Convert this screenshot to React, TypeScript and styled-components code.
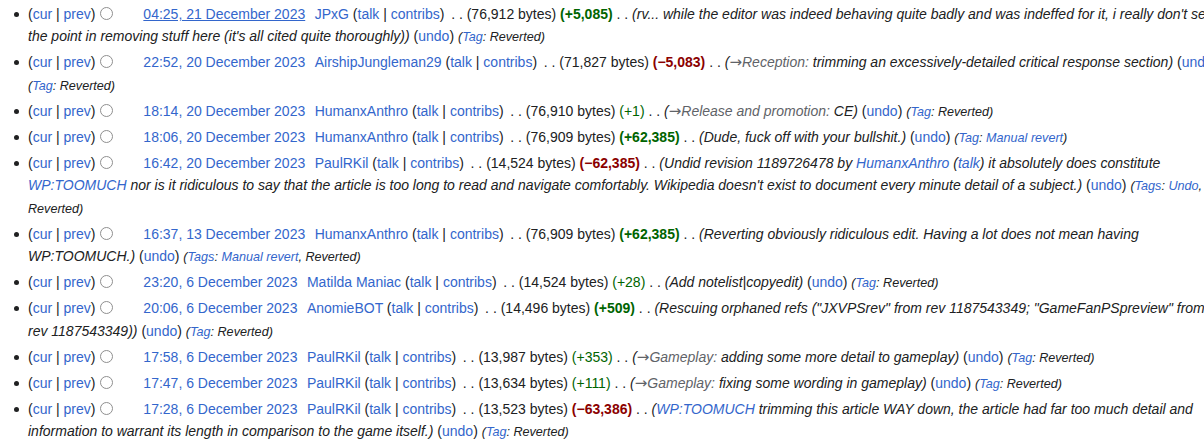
import React from 'react';
import styled, { createGlobalStyle } from 'styled-components';

const Global = createGlobalStyle`
  html, body { margin: 0; padding: 0; background: #ffffff; overflow: hidden; }
  body {
    font-family: "Liberation Sans", Arial, sans-serif;
    font-size: 14px;
    color: #202122;
  }
`;

const HistoryList = styled.ul`
  box-sizing: border-box;
  width: 1222px;
  margin: 3px 0 0 0;
  padding: 0 0 0 28px;
  list-style: none;
  line-height: 22.4px;
`;

const Row = styled.li`
  position: relative;
  margin: 0 0 3.66px 0;
  &::before {
    content: '';
    position: absolute;
    left: -14px;
    top: 8.7px;
    width: 5px;
    height: 5px;
    border-radius: 50%;
    background: #202122;
  }
`;

const Link = styled.a<{ $underline?: boolean; $muted?: boolean }>`
  color: ${(p) => (p.$muted ? '#5f6368' : '#3366cc')};
  text-decoration: ${(p) => (p.$underline ? 'underline' : 'none')};
  cursor: pointer;
`;

const Radio = styled.span<{ $hidden?: boolean }>`
  display: inline-block;
  box-sizing: border-box;
  width: 13px;
  height: 13px;
  margin: 0 4px 0 5px;
  border: 1px solid #8f8f8f;
  border-radius: 50%;
  background: #fff;
  vertical-align: -1px;
  visibility: ${(p) => (p.$hidden ? 'hidden' : 'visible')};
`;

const User = styled.span`
  margin-left: 0.4em;
  margin-right: 0.2em;
`;

const Size = styled.span``;

const Change = styled.span<{ $sign: 'pos' | 'neg'; $bold?: boolean }>`
  color: ${(p) => (p.$sign === 'pos' ? '#006400' : '#8b0000')};
  font-weight: ${(p) => (p.$bold ? 'bold' : 'normal')};
`;

const Comment = styled.span`
  font-style: italic;
`;

const AutoComment = styled.span`
  color: #5f6368;
`;

const Arrow = styled.span`
  font-family: "DejaVu Sans", sans-serif;
  font-size: 15px;
  line-height: 1;
`;

const Tags = styled.span`
  font-style: italic;
  font-size: 90%;
  line-height: 1;
`;

type Entry = {
  date: string;
  hover?: boolean;
  user: string;
  bytes: string;
  change: string;
  sign: 'pos' | 'neg';
  bold: boolean;
  comment: React.ReactNode;
  tags: React.ReactNode;
};

const reverted = (
  <>
    (<Link>Tag</Link>: Reverted)
  </>
);

const manualRevert = (
  <>
    (<Link>Tag</Link>: <Link>Manual revert</Link>)
  </>
);

const manualReverted = (
  <>
    (<Link>Tags</Link>: <Link>Manual revert</Link>, Reverted)
  </>
);

const undoReverted = (
  <>
    (<Link>Tags</Link>: <Link>Undo</Link>, Reverted)
  </>
);

const Auto: React.FC<{ section: string }> = ({ section }) => (
  <AutoComment>
    <Link $muted>
      <Arrow>→</Arrow>
      {section}
    </Link>
    :
  </AutoComment>
);

const entries: Entry[] = [
  {
    date: '04:25, 21 December 2023',
    hover: true,
    user: 'JPxG',
    bytes: '76,912',
    change: '+5,085',
    sign: 'pos',
    bold: true,
    comment: (
      <>
        rv... while the editor was indeed behaving quite badly and was indeffed for it, i really don't see the point
        in removing stuff here (it's all cited quite thoroughly)
      </>
    ),
    tags: reverted,
  },
  {
    date: '22:52, 20 December 2023',
    user: 'AirshipJungleman29',
    bytes: '71,827',
    change: '−5,083',
    sign: 'neg',
    bold: true,
    comment: (
      <>
        <Auto section="Reception" /> trimming an excessively-detailed critical response section
      </>
    ),
    tags: reverted,
  },
  {
    date: '18:14, 20 December 2023',
    user: 'HumanxAnthro',
    bytes: '76,910',
    change: '+1',
    sign: 'pos',
    bold: false,
    comment: (
      <>
        <Auto section="Release and promotion" /> CE
      </>
    ),
    tags: reverted,
  },
  {
    date: '18:06, 20 December 2023',
    user: 'HumanxAnthro',
    bytes: '76,909',
    change: '+62,385',
    sign: 'pos',
    bold: true,
    comment: <>Dude, fuck off with your bullshit.</>,
    tags: manualRevert,
  },
  {
    date: '16:42, 20 December 2023',
    user: 'PaulRKil',
    bytes: '14,524',
    change: '−62,385',
    sign: 'neg',
    bold: true,
    comment: (
      <>
        Undid revision 1189726478 by <Link>HumanxAnthro</Link> (<Link>talk</Link>) it absolutely does constitute{' '}
        <Link>WP:TOOMUCH</Link> nor is it ridiculous to say that the article is too long to read and navigate
        comfortably. Wikipedia doesn't exist to document every minute detail of a subject.
      </>
    ),
    tags: undoReverted,
  },
  {
    date: '16:37, 13 December 2023',
    user: 'HumanxAnthro',
    bytes: '76,909',
    change: '+62,385',
    sign: 'pos',
    bold: true,
    comment: <>Reverting obviously ridiculous edit. Having a lot does not mean having WP:TOOMUCH.</>,
    tags: manualReverted,
  },
  {
    date: '23:20, 6 December 2023',
    user: 'Matilda Maniac',
    bytes: '14,524',
    change: '+28',
    sign: 'pos',
    bold: false,
    comment: <>Add notelist|copyedit</>,
    tags: reverted,
  },
  {
    date: '20:06, 6 December 2023',
    user: 'AnomieBOT',
    bytes: '14,496',
    change: '+509',
    sign: 'pos',
    bold: true,
    comment: <>Rescuing orphaned refs ("JXVPSrev" from rev 1187543349; "GameFanPSpreview" from rev 1187543349)</>,
    tags: reverted,
  },
  {
    date: '17:58, 6 December 2023',
    user: 'PaulRKil',
    bytes: '13,987',
    change: '+353',
    sign: 'pos',
    bold: false,
    comment: (
      <>
        <Auto section="Gameplay" /> adding some more detail to gameplay
      </>
    ),
    tags: reverted,
  },
  {
    date: '17:47, 6 December 2023',
    user: 'PaulRKil',
    bytes: '13,634',
    change: '+111',
    sign: 'pos',
    bold: false,
    comment: (
      <>
        <Auto section="Gameplay" /> fixing some wording in gameplay
      </>
    ),
    tags: reverted,
  },
  {
    date: '17:28, 6 December 2023',
    user: 'PaulRKil',
    bytes: '13,523',
    change: '−63,386',
    sign: 'neg',
    bold: true,
    comment: (
      <>
        <Link>WP:TOOMUCH</Link> trimming this article WAY down, the article had far too much detail and information to
        warrant its length in comparison to the game itself.
      </>
    ),
    tags: reverted,
  },
];

const HistoryRow: React.FC<{ e: Entry }> = ({ e }) => (
  <Row>
    <span>
      (<Link>cur</Link> | <Link>prev</Link>)
    </span>
    <Radio />
    <Radio $hidden />{' '}
    <Link $underline={e.hover}>{e.date}</Link>{' '}
    <User>
      <Link>{e.user}</Link> (<Link>talk</Link> | <Link>contribs</Link>)
    </User>{' '}
    <span>. .</span> <Size>({e.bytes} bytes)</Size>{' '}
    <Change $sign={e.sign} $bold={e.bold}>
      ({e.change})
    </Change>{' '}
    <span>. .</span> <Comment>({e.comment})</Comment>{' '}
    <span>
      (<Link>undo</Link>)
    </span>{' '}
    <Tags>{e.tags}</Tags>
  </Row>
);

export default function App() {
  return (
    <>
      <Global />
      <HistoryList>
        {entries.map((e, i) => (
          <HistoryRow key={i} e={e} />
        ))}
      </HistoryList>
    </>
  );
}
